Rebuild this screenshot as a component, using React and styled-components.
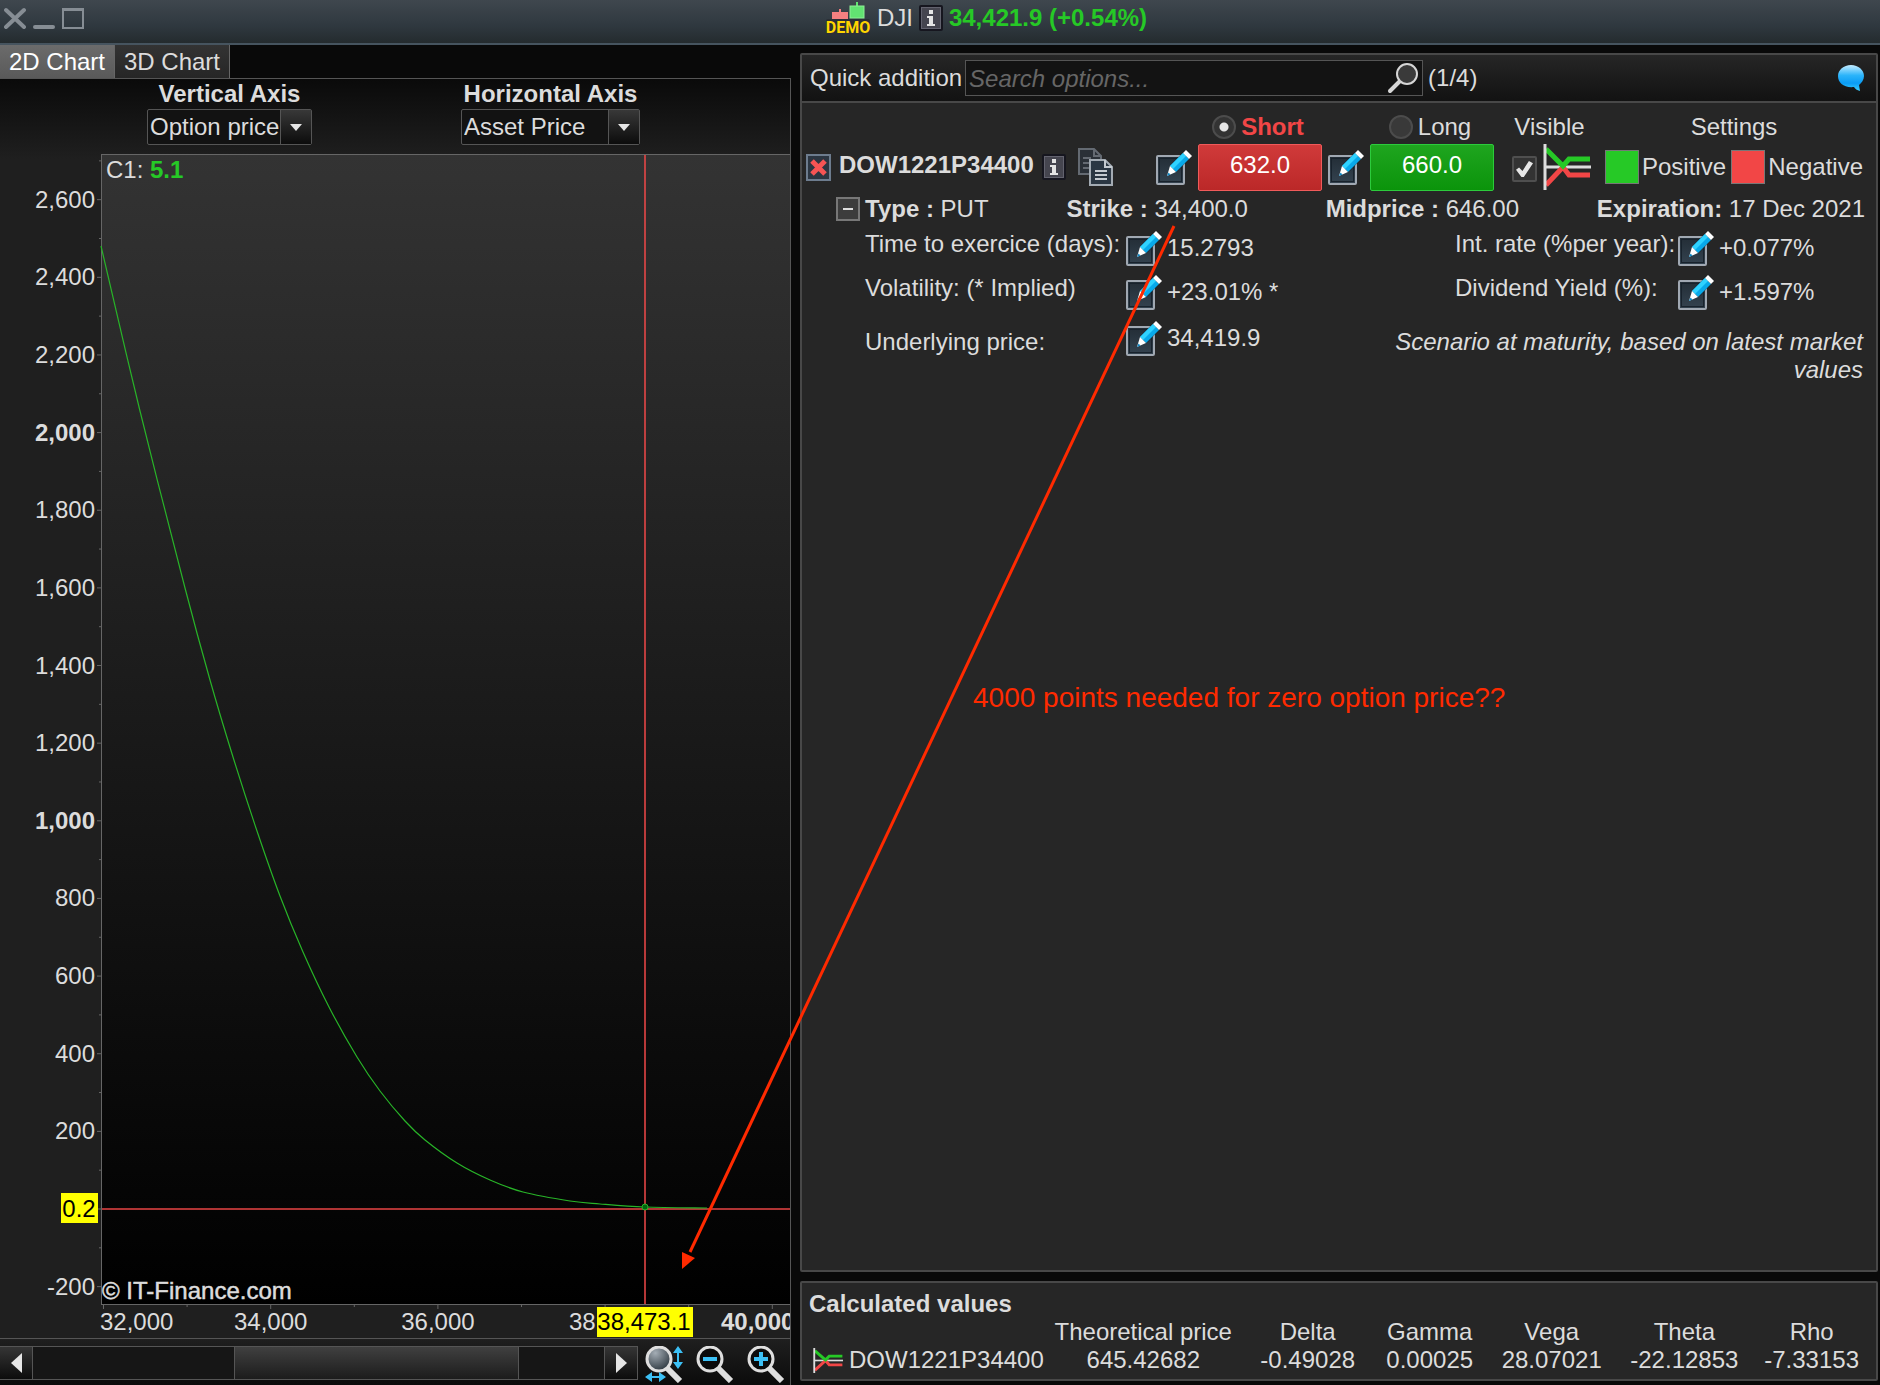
import { useState } from 'react';
import styled, { createGlobalStyle, css } from 'styled-components';

const GlobalStyle = createGlobalStyle`
  :root {
    --clr-text: #dcdcdc;
    --clr-line: #555;
    --clr-panel: #262626;
    --clr-green: #26c926;
    --clr-red: #f24646;
    --clr-blue: #3cc0f5;
  }
  *, *::before, *::after {
    box-sizing: border-box;
  }
  body {
    margin: 0;
    background-color: #090909;
  }
  body, button, input, select {
    font-family: 'Liberation Sans', Arial, sans-serif;
    font-size: 24px;
    line-height: 28px;
    color: var(--clr-text);
  }
  button {
    padding: 0;
    border: 0;
    background: none;
    cursor: pointer;
  }
  svg {
    display: block;
    flex: none;
  }
`;

const Page = styled.div`
  position: relative;
  display: flex;
  flex-direction: column;
  min-height: 100vh;
`;

/* ---------- title bar ---------- */

const TitleBar = styled.header`
  display: grid;
  grid-template-columns: 1fr auto 1fr;
  height: 45px;
  padding: 0 4px;
  background: linear-gradient(#3f474e, #2f383f 60%, #242b2e);
  border-bottom: 2px solid #46545f;
`;

const WindowButtons = styled.div`
  display: flex;
  align-items: flex-start;
  gap: 7px;
  padding-top: 7px;
`;

const Quote = styled.h1`
  display: flex;
  align-items: flex-start;
  gap: 6px;
  margin: 0;
  padding: 2px 0 0 92px;
  font-size: 24px;
  line-height: 32px;
  font-weight: 400;
`;

const QuoteValue = styled.strong`
  color: var(--clr-green);
`;

const InfoButton = styled.button`
  display: block;
  padding-top: ${({ $top }) => $top || 0}px;
`;

/* ---------- chart side ---------- */

const Main = styled.main`
  flex: 1;
  display: grid;
  grid-template-columns: minmax(0, 791fr) minmax(0, 1089fr);
`;

const ChartSide = styled.section`
  display: flex;
  flex-direction: column;
`;

const Tabs = styled.nav`
  display: flex;
  height: 33px;
`;

const Tab = styled.button`
  width: 115px;
  border-right: 1px solid #666;
  color: ${({ $active }) => ($active ? '#fff' : 'var(--clr-text)')};
  background: ${({ $active }) => ($active ? 'linear-gradient(#6b6b6b, #5a5a5a)' : 'linear-gradient(#333, #262626)')};
`;

const ChartPanel = styled.div`
  flex: 1;
  display: flex;
  flex-direction: column;
  border: 1px solid var(--clr-line);
  border-width: 1px 1px 0 0;
  background: linear-gradient(#0a0a0a, #1f1f1f 80px);
`;

const AxisBar = styled.div`
  display: flex;
  gap: 149px;
  padding: 1px 0 0 147px;
  height: 71px;
`;

const AxisField = styled.label`
  display: flex;
  flex-direction: column;
  gap: 1px;
  width: ${({ $width }) => $width}px;
  font-weight: 700;
  text-align: center;
`;

const SelectBox = styled.span`
  position: relative;
  display: block;
`;

const Select = styled.select`
  appearance: none;
  display: block;
  width: 100%;
  height: 36px;
  padding: 0 0 1px 2px;
  border: 1px solid var(--clr-line);
  border-radius: 2px;
  background-color: #121212;
  outline: none;
`;

const SelectArrow = styled.span`
  position: absolute;
  top: 1px;
  right: 1px;
  bottom: 1px;
  width: 31px;
  display: grid;
  place-content: center;
  border-left: 1px solid var(--clr-line);
  background: linear-gradient(#383838, #0c0c0c);
  pointer-events: none;
`;

const ChartSvg = styled.svg`
  width: 100%;
  height: auto;
`;

const BottomBar = styled.div`
  flex: 1;
  display: flex;
  align-items: flex-start;
  gap: 7px;
  padding-top: 7px;
  border-top: 1px solid var(--clr-line);
  background: linear-gradient(#1f1f1f, #0b0b0b);
`;

const ScrollBar = styled.div`
  flex: 1;
  display: grid;
  grid-template-columns: 33px 202fr 286fr 85fr 33px;
  height: 34px;
  border: 1px solid var(--clr-line);
  border-left: 0;
  background-color: #161616;
`;

const ScrollButton = styled.button`
  display: grid;
  place-content: center;
  background: linear-gradient(#353535, #0c0c0c);
  border: 0 solid var(--clr-line);
  border-width: ${({ $end }) => ($end ? '0 0 0 1px' : '0 1px 0 0')};
`;

const ScrollThumb = styled.div`
  grid-column: 3;
  border: 0 solid var(--clr-line);
  border-width: 0 1px;
  background: linear-gradient(#404040, #1c1c1c);
`;

const ZoomButtons = styled.div`
  display: flex;
  gap: 13px;
  padding-right: 5px;
`;

/* ---------- options side ---------- */

const OptionsSide = styled.section`
  display: flex;
  flex-direction: column;
  gap: 9px;
  padding: 8px 2px 4px 9px;
`;

const panel = css`
  border: 2px solid #484848;
  border-radius: 2px;
  background-color: var(--clr-panel);
`;

const OptionsPanel = styled.div`
  ${panel}
  flex: 1;
`;

const SearchBar = styled.form`
  display: flex;
  align-items: center;
  height: 48px;
  padding: 0 12px 0 8px;
  border-bottom: 2px solid #484848;
  background: linear-gradient(#262626, #121212);
`;

const SearchBox = styled.div`
  display: flex;
  align-items: center;
  width: 458px;
  height: 36px;
  margin: 0 5px 0 3px;
  padding: 0 3px;
  border: 1px solid var(--clr-line);
  background-color: #131313;
`;

const SearchInput = styled.input`
  flex: 1;
  min-width: 0;
  padding: 2px 0 0;
  border: 0;
  outline: 0;
  background: none;
  &::placeholder {
    color: #666;
    font-style: italic;
    opacity: 1;
  }
`;

const ChatButton = styled.button`
  margin-left: auto;
`;

const OptionGrid = styled.div`
  display: grid;
  grid-template-columns: minmax(0, 1fr) 172px 184px 93px 258px;
  align-items: center;
  padding: 8px 13px 0 4px;
`;

const Head = styled.div`
  display: flex;
  align-items: center;
  justify-content: center;
  height: 32px;
  padding: ${({ $pad }) => $pad || '0'};
`;

const RadioLabel = styled.label`
  display: flex;
  align-items: center;
  gap: 5px;
  font-weight: ${({ $active }) => ($active ? 700 : 400)};
  color: ${({ $active }) => ($active ? 'var(--clr-red)' : 'inherit')};
`;

const Radio = styled.input`
  appearance: none;
  width: 24px;
  height: 24px;
  margin: 0;
  border: 2px solid #4c4c4c;
  border-radius: 50%;
  background-color: #393939;
  &:checked {
    background: radial-gradient(circle, #e6e6e6 0 4px, #333 5px);
  }
`;

const OptionName = styled.div`
  display: flex;
  align-items: center;
  gap: 8px;
  height: 48px;
`;

const NameText = styled.strong`
  padding-bottom: 4px;
`;

const CopyButton = styled.button`
  margin-left: 4px;
`;

const PriceCell = styled.div`
  display: flex;
  align-items: center;
  gap: 6px;
`;

const PriceButton = styled.button`
  width: 124px;
  height: 47px;
  padding-bottom: 4px;
  border: 1px solid ${({ $buy }) => ($buy ? '#2ccb3c' : '#f05a5a')};
  border-radius: 2px;
  color: #fff;
  background: ${({ $buy }) => ($buy ? 'linear-gradient(#1fa51f, #0b940b)' : 'linear-gradient(#d03a3a, #bb2828)')};
`;

const VisibleCell = styled.div`
  display: flex;
  align-items: center;
  gap: 6px;
`;

const CheckBox = styled.input`
  appearance: none;
  display: grid;
  place-content: center;
  width: 25px;
  height: 26px;
  margin: 4px 0 0;
  border: 2px solid #4f4f4f;
  border-radius: 2px;
  background-color: #333;
  &:checked::before {
    content: '';
    width: 17px;
    height: 16px;
    background-color: #e6e6e6;
    clip-path: polygon(0 55%, 18% 40%, 38% 62%, 76% 0, 100% 14%, 46% 100%, 32% 100%);
  }
`;

const SettingsCell = styled.div`
  display: flex;
  justify-content: space-between;
`;

const ColorButton = styled.button`
  display: flex;
  align-items: center;
  gap: 3px;
`;

const Swatch = styled.span`
  width: 34px;
  height: 34px;
  border: 1px solid #777;
  background-color: ${({ $color }) => $color};
`;

const Summary = styled.div`
  display: flex;
  align-items: center;
  justify-content: space-between;
  padding: 4px 11px 0 34px;
  white-space: nowrap;
`;

const TypeCell = styled.div`
  display: flex;
  align-items: center;
  gap: 5px;
`;

const CollapseButton = styled.button`
  display: grid;
  place-content: center;
  width: 24px;
  height: 24px;
  border: 2px solid #777;
  background-color: #3c3c3c;
  &::before {
    content: '';
    width: 10px;
    height: 2px;
    background-color: #ddd;
  }
`;

const Details = styled.div`
  display: grid;
  grid-template-columns: minmax(0, 1fr) 408px;
  row-gap: 8px;
  padding: 7px 13px 0 63px;
`;

const Detail = styled.div`
  display: grid;
  grid-template-columns: ${({ $label }) => $label}px auto 1fr;
  column-gap: 5px;
  align-items: center;
  height: 36px;
  margin-top: ${({ $last }) => ($last ? 2 : 0)}px;
  white-space: nowrap;
`;

const DetailLabel = styled.span`
  align-self: ${({ $last }) => ($last ? 'end' : 'start')};
`;

/* wider than its column: the sentence starts left of the rate fields */
const Note = styled.p`
  margin: 10px 0 0 -64px;
  font-style: italic;
  text-align: right;
`;

const ValuesPanel = styled.div`
  ${panel}
  padding: 7px 6px 5px 7px;
`;

const ValuesTitle = styled.h2`
  margin: 0;
  font-size: 24px;
  line-height: 28px;
`;

const ValuesTable = styled.table`
  width: 100%;
  table-layout: fixed;
  border-collapse: collapse;
  text-align: center;
  th, td {
    padding: 0;
    font-weight: 400;
    white-space: nowrap;
  }
`;

const Contract = styled.div`
  display: flex;
  align-items: center;
  gap: 6px;
  padding-left: 4px;
`;

/* ---------- drawing over the page ---------- */

const Overlay = styled.svg`
  position: absolute;
  top: 0;
  left: 0;
  width: 100%;
  height: auto;
  pointer-events: none;
`;

/* ---------- icons ---------- */

const InfoIcon = () => (
  <svg width="24" height="26" viewBox="0 0 24 26">
    <rect x="1" y="1" width="22" height="24" rx="1" fill="#45454f" stroke="#16161f" strokeWidth="2" />
    <rect x="2.5" y="2.5" width="19" height="21" fill="none" stroke="#62626e" />
    <path d="M10 5h4v4h-4zM8 11h6v8h2v2H8v-2h2v-6H8z" fill="#e4e4e4" />
  </svg>
);

const DemoIcon = () => (
  <svg width="46" height="34" viewBox="0 0 46 34">
    <rect x="1" y="17" width="44" height="16" rx="2" fill="#2b2f36" />
    <path d="M15 7v4M8 11h14v5H8z" fill="#f58080" stroke="#f58080" strokeWidth="2" />
    <path d="M32 0v5" stroke="#62e372" strokeWidth="2" />
    <rect x="25" y="4" width="14" height="12" fill="#62e372" stroke="#8df095" />
    <text x="23" y="31" textAnchor="middle" fontFamily="Roboto, sans-serif" fontSize="16" fontWeight="700" fill="#ffd500">DEMO</text>
  </svg>
);

const EditIcon = () => (
  <svg width="36" height="36" viewBox="0 0 36 36">
    <defs>
      <linearGradient id="editBox" x1="0" y1="0" x2="0" y2="1">
        <stop offset="0" stopColor="#232d36" />
        <stop offset="1" stopColor="#344350" />
      </linearGradient>
    </defs>
    <rect x="1" y="7" width="27" height="28" rx="1" fill="url(#editBox)" stroke="#a0a8b2" strokeWidth="2" />
    <rect x="3.5" y="9.5" width="22" height="23" fill="none" stroke="#18222c" />
    <path d="M11 27l4-11 13-14 7 6-13 14z" fill="#10202c" opacity=".6" />
    <path d="M14 17L27 4l6 6-13 13z" fill="#08a9ea" />
    <path d="M14 17L27 4l3 3-13 13z" fill="#2fd2ff" />
    <path d="M27 4l3-3 6 6-3 3z" fill="#fff" />
    <path d="M14 17l6 6-9 4z" fill="#fff" />
    <path d="M11 27l1.500-3.500 2 2z" fill="#0b86c4" />
  </svg>
);

const PayoffIcon = ({ width, height }) => (
  <svg width={width} height={height} viewBox="0 0 48 46" preserveAspectRatio="none">
    <path d="M2 23h46" stroke="#ddd" strokeWidth="3" />
    <path d="M3 41l17-18 6 8h21" fill="none" stroke="#f24646" strokeWidth="5" />
    <path d="M3 5l17 17 6-7h21" fill="none" stroke="#26c926" strokeWidth="5" />
    <path d="M2 0v46" stroke="#ddd" strokeWidth="3" />
  </svg>
);

const RemoveIcon = () => (
  <svg width="25" height="27" viewBox="0 0 25 27">
    <rect x="1" y="1" width="23" height="25" fill="#2c3642" stroke="#6d7c8e" strokeWidth="2" />
    <path d="M6 7l13 13M19 7L6 20" stroke="#f75454" strokeWidth="5" />
  </svg>
);

const CopyIcon = () => (
  <svg width="36" height="40" viewBox="0 0 36 40">
    <g strokeWidth="2">
      <path d="M1 2h15l7 7v18H1z" fill="#2a3037" stroke="#646a72" />
      <path d="M16 2v7h7M5 11h8M5 16h8M5 21h8" fill="none" stroke="#646a72" />
      <path d="M12 13h15l7 7v18H12z" fill="#2b3743" stroke="#a3abb3" />
      <path d="M27 13v7h7M17 24h12M17 28h12M17 32h12" fill="none" stroke="#c5cbd1" />
    </g>
  </svg>
);

const SearchIcon = () => (
  <svg width="32" height="32" viewBox="0 0 32 32">
    <path d="M14 18L3 29" stroke="#d6d6d6" strokeWidth="4" strokeLinecap="round" />
    <circle cx="20" cy="12" r="10" fill="#3a3a3a" stroke="#d6d6d6" strokeWidth="2" />
  </svg>
);

const ChatIcon = () => (
  <svg width="26" height="26" viewBox="0 0 26 26">
    <defs>
      <linearGradient id="chat" x1="0" y1="0" x2="0" y2="1">
        <stop offset="0" stopColor="#c4ecff" />
        <stop offset=".4" stopColor="#2bb4fa" />
        <stop offset=".7" stopColor="#0a9cf5" />
        <stop offset="1" stopColor="#3bd0ff" />
      </linearGradient>
    </defs>
    <path d="M13 0c7.500 0 13 5 13 11 0 4-2.500 7-5 9l1 6c-3-1-5-2-6-4C6 23 0 18 0 11 0 5 5.500 0 13 0z" fill="url(#chat)" />
  </svg>
);

const ZoomIcon = ({ kind }) => (
  <svg width="38" height="37" viewBox="0 0 38 37">
    <defs>
      <radialGradient id="lens" cx=".35" cy=".25" r=".8">
        <stop offset="0" stopColor="#a4adb5" />
        <stop offset="1" stopColor="#2a343c" />
      </radialGradient>
    </defs>
    <path d="M22 22l13 13" stroke="#dedede" strokeWidth="6" />
    <circle cx="14" cy="13" r="12" fill={kind === 'fit' ? 'url(#lens)' : '#0b0b0b'} stroke="#dedede" strokeWidth="3" />
    {kind !== 'fit' && <path d="M7 13h14" stroke="#3cc0f5" strokeWidth="4" />}
    {kind === 'in' && <path d="M14 6v14" stroke="#3cc0f5" strokeWidth="4" />}
    {kind === 'fit' && (
      <g fill="#3cc0f5">
        <path d="M33 0l5 7h-4v9h4l-5 7-5-7h4V7h-4z" />
        <path d="M0 31l7-5v4h7v-4l7 5-7 5v-4H7v4z" />
      </g>
    )}
  </svg>
);

/* ---------- chart ---------- */

const yOf = price => 1209 - price * 0.3882;
const xOf = asset => 103.5 + (asset - 32000) * 0.0836;

const yTicks = Array.from({ length: 15 }, (_, i) => 2600 - i * 200);
const yMinor = Array.from({ length: 15 }, (_, i) => 2700 - i * 200);
const xTicks = [32000, 33000, 34000, 35000, 36000, 37000, 38000, 39000, 40000];

const curve = [
  [101, 246], [140, 411], [185, 588], [210, 680], [233, 757], [257, 831], [280, 896],
  [303, 952], [329, 1007], [357, 1057], [380, 1091], [405, 1121], [425, 1140], [457, 1163],
  [490, 1180], [523, 1192], [570, 1201], [600, 1204], [645, 1207], [707, 1208],
];

// cubic segments whose handles follow the neighbouring points
const smooth = points =>
  points.slice(1).reduce((d, p, i) => {
    const a = points[i - 1] || points[i];
    const b = points[i];
    const c = points[i + 2] || p;
    const h1 = [b[0] + (p[0] - a[0]) / 6, b[1] + (p[1] - a[1]) / 6];
    const h2 = [p[0] - (c[0] - b[0]) / 6, p[1] - (c[1] - b[1]) / 6];
    return `${d}C${h1} ${h2} ${p}`;
  }, `M${points[0]}`);

function Chart() {
  return (
    <ChartSvg viewBox="0 150 790 1188" fontFamily="'Liberation Sans', Arial, sans-serif" fontSize="24" fill="#dcdcdc">
      <defs>
        <linearGradient id="plot" x1="0" y1="0" x2="0" y2="1">
          <stop offset="0" stopColor="#333" />
          <stop offset="1" stopColor="#000" />
        </linearGradient>
      </defs>
      <rect x="101.500" y="154.500" width="690" height="1150" fill="url(#plot)" stroke="#666" />

      {yMinor.map(v => <path key={v} d={`M99 ${yOf(v)}h3`} stroke="#666" />)}
      {yTicks.map(v => (
        <g key={v}>
          <path d={`M97 ${yOf(v)}h5`} stroke="#666" />
          {v !== 0 && (
            <text x="95" y={yOf(v) + 8} textAnchor="end" fontWeight={v === 1000 || v === 2000 ? 700 : 400}>
              {v.toLocaleString('en-US')}
            </text>
          )}
        </g>
      ))}
      {xTicks.map(v => <path key={v} d={`M${xOf(v)} 1305v${v % 2000 ? 2 : 4}`} stroke="#666" />)}
      <text x="100" y="1330">32,000</text>
      <text x={xOf(34000)} y="1330" textAnchor="middle">34,000</text>
      <text x={xOf(36000)} y="1330" textAnchor="middle">36,000</text>
      <text x="569" y="1330">38</text>
      <text x="721" y="1330" fontWeight="700">40,000</text>

      <text x="106" y="178">C1: <tspan fontWeight="700" fill="#26c926">5.1</tspan></text>
      <text x="102" y="1299" stroke="#dcdcdc" strokeWidth=".5">© IT-Finance.com</text>

      <path d="M102 1209h688" stroke="#e84545" strokeWidth="1.500" />
      <path d="M645 155v1149" stroke="#f04848" strokeWidth="1.500" />
      <path d={smooth(curve)} fill="none" stroke="#28b428" strokeWidth="1.200" />
      <circle cx="645" cy="1207" r="3" fill="#061" stroke="#28b428" />

      <rect x="61" y="1193" width="37" height="30" fill="#ff0" />
      <text x="79" y="1217" textAnchor="middle" fill="#000">0.2</text>
      <rect x="597" y="1307" width="96" height="30" fill="#ff0" />
      <text x="644" y="1330" textAnchor="middle" fill="#000">38,473.1</text>
    </ChartSvg>
  );
}

function AxisSelect({ label, value, width }) {
  return (
    <AxisField $width={width}>
      {label}
      <SelectBox>
        <Select defaultValue={value}>
          <option>{value}</option>
        </Select>
        <SelectArrow>
          <svg width="12" height="7" viewBox="0 0 12 7"><path d="M0 0h12L6 7z" fill="#e6e6e6" /></svg>
        </SelectArrow>
      </SelectBox>
    </AxisField>
  );
}

function Field({ label, value, labelWidth, last }) {
  return (
    <Detail $label={labelWidth} $last={last}>
      <DetailLabel $last={last}>{label}</DetailLabel>
      <button type="button" aria-label={`Edit ${label}`}><EditIcon /></button>
      <span>{value}</span>
    </Detail>
  );
}

const greeks = [
  { name: 'Theoretical price', value: '645.42682', width: '19%' },
  { name: 'Delta', value: '-0.49028', width: '12%' },
  { name: 'Gamma', value: '0.00025', width: '11%' },
  { name: 'Vega', value: '28.07021', width: '12%' },
  { name: 'Theta', value: '-22.12853', width: '13%' },
  { name: 'Rho', value: '-7.33153', width: '11%' },
];

function App() {
  const [side, setSide] = useState('short');
  const [visible, setVisible] = useState(true);

  return (
    <Page>
      <GlobalStyle />
      <TitleBar>
        <WindowButtons>
          <button aria-label="Close">
            <svg width="22" height="22" viewBox="0 0 22 22"><path d="M2 3l18 17M20 3L2 20" stroke="#868d94" strokeWidth="4" strokeLinecap="round" /></svg>
          </button>
          <button aria-label="Minimize">
            <svg width="22" height="22" viewBox="0 0 22 22"><path d="M2 20h18" stroke="#868d94" strokeWidth="4" strokeLinecap="round" /></svg>
          </button>
          <button aria-label="Maximize">
            <svg width="22" height="22" viewBox="0 0 22 22"><path d="M1 2h20v19H1zM1 3h20" fill="none" stroke="#868d94" strokeWidth="2" /></svg>
          </button>
        </WindowButtons>
        <Quote>
          <DemoIcon />
          <span>DJI</span>
          <InfoButton aria-label="DJI information" $top={3}><InfoIcon /></InfoButton>
          <QuoteValue>34,421.9 (+0.54%)</QuoteValue>
        </Quote>
      </TitleBar>

      <Main>
        <ChartSide>
          <Tabs>
            <Tab $active>2D Chart</Tab>
            <Tab>3D Chart</Tab>
          </Tabs>
          <ChartPanel>
            <AxisBar>
              <AxisSelect label="Vertical Axis" value="Option price" width={165} />
              <AxisSelect label="Horizontal Axis" value="Asset Price" width={179} />
            </AxisBar>
            <Chart />
            <BottomBar>
              <ScrollBar>
                <ScrollButton aria-label="Scroll left">
                  <svg width="11" height="20" viewBox="0 0 11 20"><path d="M11 0v20L0 10z" fill="#e6e6e6" /></svg>
                </ScrollButton>
                <ScrollThumb />
                <span />
                <ScrollButton $end aria-label="Scroll right">
                  <svg width="11" height="20" viewBox="0 0 11 20"><path d="M0 0v20l11-10z" fill="#e6e6e6" /></svg>
                </ScrollButton>
              </ScrollBar>
              <ZoomButtons>
                <button aria-label="Fit"><ZoomIcon kind="fit" /></button>
                <button aria-label="Zoom out"><ZoomIcon kind="out" /></button>
                <button aria-label="Zoom in"><ZoomIcon kind="in" /></button>
              </ZoomButtons>
            </BottomBar>
          </ChartPanel>
        </ChartSide>

        <OptionsSide>
          <OptionsPanel>
            <SearchBar>
              <label htmlFor="search">Quick addition</label>
              <SearchBox>
                <SearchInput id="search" placeholder="Search options..." />
                <button type="button" aria-label="Search"><SearchIcon /></button>
              </SearchBox>
              (1/4)
              <ChatButton type="button" aria-label="Chat"><ChatIcon /></ChatButton>
            </SearchBar>

            <OptionGrid>
              <span />
              <Head $pad="0 0 0 32px">
                <RadioLabel $active={side === 'short'}>
                  <Radio type="radio" name="side" checked={side === 'short'} onChange={() => setSide('short')} />
                  Short
                </RadioLabel>
              </Head>
              <Head $pad="0 0 0 20px">
                <RadioLabel $active={side === 'long'}>
                  <Radio type="radio" name="side" checked={side === 'long'} onChange={() => setSide('long')} />
                  Long
                </RadioLabel>
              </Head>
              <Head $pad="0 18px 0 0"><label htmlFor="visible">Visible</label></Head>
              <Head>Settings</Head>

              <OptionName>
                <button aria-label="Remove"><RemoveIcon /></button>
                <NameText>DOW1221P34400</NameText>
                <InfoButton aria-label="Option information"><InfoIcon /></InfoButton>
                <CopyButton aria-label="Duplicate"><CopyIcon /></CopyButton>
              </OptionName>
              <PriceCell>
                <button aria-label="Edit short price"><EditIcon /></button>
                <PriceButton>632.0</PriceButton>
              </PriceCell>
              <PriceCell>
                <button aria-label="Edit long price"><EditIcon /></button>
                <PriceButton $buy>660.0</PriceButton>
              </PriceCell>
              <VisibleCell>
                <CheckBox id="visible" type="checkbox" checked={visible} onChange={e => setVisible(e.target.checked)} />
                <PayoffIcon width={48} height={46} />
              </VisibleCell>
              <SettingsCell>
                <ColorButton><Swatch $color="var(--clr-green)" />Positive</ColorButton>
                <ColorButton><Swatch $color="var(--clr-red)" />Negative</ColorButton>
              </SettingsCell>
            </OptionGrid>

            <Summary>
              <TypeCell>
                <CollapseButton aria-label="Collapse" />
                <span><strong>Type :</strong> PUT</span>
              </TypeCell>
              <span><strong>Strike :</strong> 34,400.0</span>
              <span><strong>Midprice :</strong> 646.00</span>
              <span><strong>Expiration:</strong> 17 Dec 2021</span>
            </Summary>

            <Details>
              <Field label="Time to exercice (days):" value="15.2793" labelWidth={256} />
              <Field label="Int. rate (%per year):" value="+0.077%" labelWidth={218} />
              <Field label="Volatility: (* Implied)" value="+23.01% *" labelWidth={256} />
              <Field label="Dividend Yield (%):" value="+1.597%" labelWidth={218} />
              <Field label="Underlying price:" value="34,419.9" labelWidth={256} last />
              <Note>Scenario at maturity, based on latest market values</Note>
            </Details>
          </OptionsPanel>

          <ValuesPanel>
            <ValuesTitle>Calculated values</ValuesTitle>
            <ValuesTable>
              <colgroup>
                <col />
                {greeks.map(g => <col key={g.name} style={{ width: g.width }} />)}
              </colgroup>
              <thead>
                <tr>
                  <td />
                  {greeks.map(g => <th key={g.name} scope="col">{g.name}</th>)}
                </tr>
              </thead>
              <tbody>
                <tr>
                  <td><Contract><PayoffIcon width={30} height={25} />DOW1221P34400</Contract></td>
                  {greeks.map(g => <td key={g.name}>{g.value}</td>)}
                </tr>
              </tbody>
            </ValuesTable>
          </ValuesPanel>
        </OptionsSide>
      </Main>

      <Overlay viewBox="0 0 1880 1385" fill="#ff2a00">
        <path d="M1174 226L690 1252" stroke="#ff2a00" strokeWidth="3" />
        <path d="M682 1269v-17l13 6z" />
        <text x="973" y="707" fontFamily="'Liberation Sans', Arial, sans-serif" fontSize="28">
          4000 points needed for zero option price??
        </text>
      </Overlay>
    </Page>
  );
}

export default App;
